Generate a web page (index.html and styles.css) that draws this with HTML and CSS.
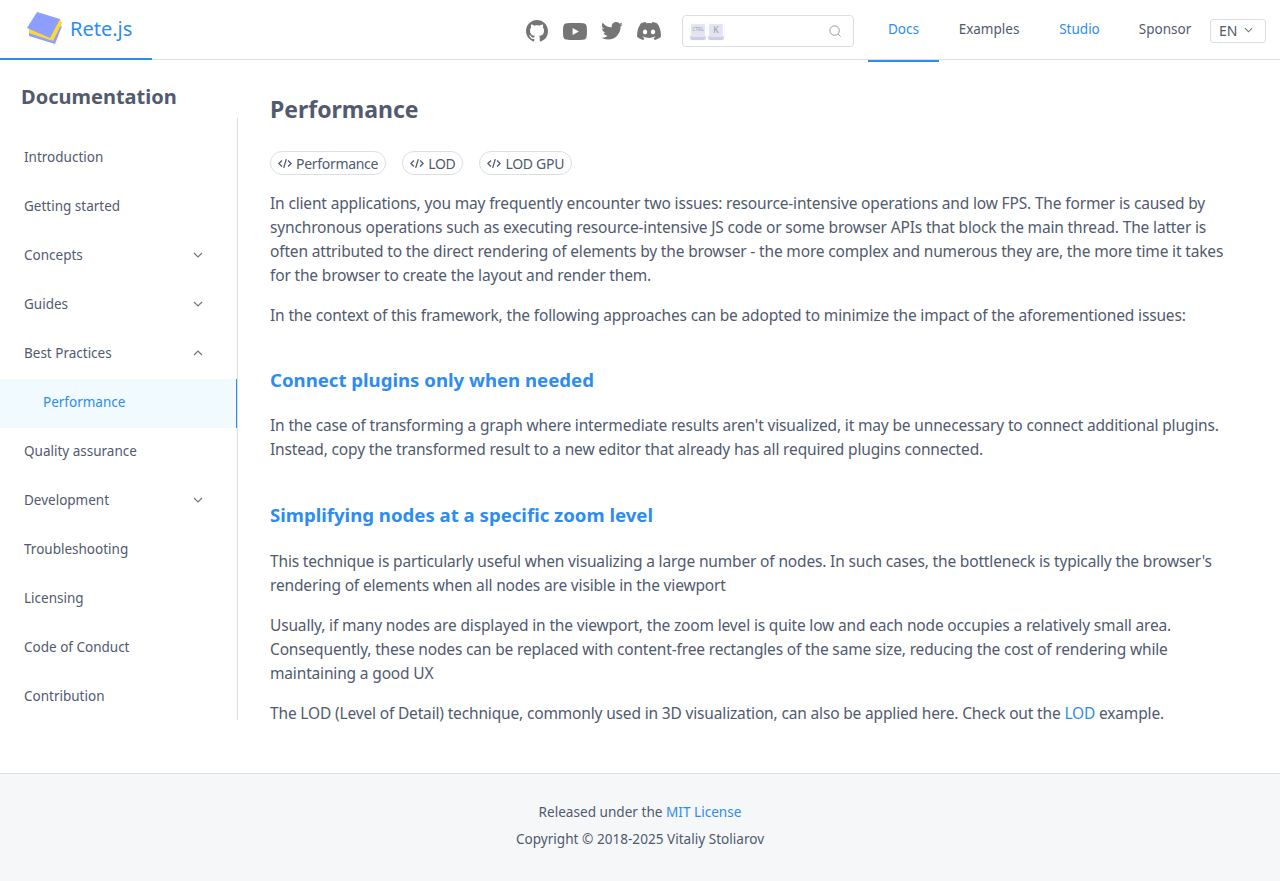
FILE: index.html
```html
<!DOCTYPE html>
<html lang="en">
<head>
    <meta charset="UTF-8">
    <title>Performance | Rete.js</title>
    <link rel="stylesheet" href="styles.css">
</head>
<body>
    <header class="top_bar">
        <a class="logo" href="#">
            <svg class="logo_img" viewBox="0 0 36 34" width="36" height="34">
                <path d="M2 19 L2 24 L28 32 L35 14 Z" fill="#8c9eff"/>
                <path d="M2 17 L2 21 L26 29 L35 11 L33 7 Z" fill="#ffd92c"/>
                <path d="M10 0 L33 7 L23 26 L0 16 Z" fill="#8c9eff"/>
            </svg>
            <span>Rete.js</span>
        </a>
        <div class="social">
            <svg class="github" viewBox="0 0 16 16" width="22" height="22"><path fill="#757575" d="M8 0C3.58 0 0 3.58 0 8c0 3.54 2.29 6.53 5.47 7.59.4.07.55-.17.55-.38 0-.19-.01-.82-.01-1.49-2.01.37-2.53-.49-2.69-.94-.09-.23-.48-.94-.82-1.13-.28-.15-.68-.52-.01-.53.63-.01 1.08.58 1.23.82.72 1.21 1.87.87 2.33.66.07-.52.28-.87.51-1.07-1.78-.2-3.64-.89-3.64-3.95 0-.87.31-1.59.82-2.15-.08-.2-.36-1.02.08-2.12 0 0 .67-.21 2.2.82.64-.18 1.32-.27 2-.27s1.36.09 2 .27c1.53-1.04 2.2-.82 2.2-.82.44 1.1.16 1.92.08 2.12.51.56.82 1.27.82 2.15 0 3.07-1.87 3.75-3.65 3.95.29.25.54.73.54 1.48 0 1.07-.01 1.93-.01 2.2 0 .21.15.46.55.38A8.01 8.01 0 0 0 16 8c0-4.42-3.58-8-8-8z"/></svg>
            <svg viewBox="0 0 24 17" width="24" height="17"><path fill="#757575" d="M23.5 2.7A3 3 0 0 0 21.4.5C19.5 0 12 0 12 0S4.500 0 2.600.5A3 3 0 0 0 .5 2.700C0 4.600 0 8.500 0 8.500s0 3.900.5 5.800a3 3 0 0 0 2.100 2.200c1.900.5 9.400.5 9.400.5s7.500 0 9.400-.5a3 3 0 0 0 2.100-2.200c.5-1.900.5-5.800.5-5.800s0-3.900-.5-5.800zM9.600 12.100V4.900l6.300 3.600z"/></svg>
            <svg viewBox="0 0 24 20" width="22" height="18"><path fill="#757575" d="M24 2.400a9.800 9.800 0 0 1-2.800.8A4.900 4.900 0 0 0 23.300.5a9.800 9.800 0 0 1-3.100 1.200 4.900 4.900 0 0 0-8.400 4.500A14 14 0 0 1 1.700.9a4.900 4.900 0 0 0 1.500 6.600 4.900 4.900 0 0 1-2.200-.6v.1a4.900 4.900 0 0 0 3.900 4.800 4.900 4.900 0 0 1-2.200.1 4.900 4.900 0 0 0 4.600 3.400A9.900 9.900 0 0 1 0 17.300 14 14 0 0 0 7.500 19.500c9.100 0 14-7.500 14-14v-.6A10 10 0 0 0 24 2.400z"/></svg>
            <svg viewBox="0 0 127 96" width="24" height="18"><path fill="#757575" d="M107.700 8.100A105 105 0 0 0 81.500 0a72 72 0 0 0-3.400 6.800 98 98 0 0 0-29 0A72 72 0 0 0 45.700 0a105 105 0 0 0-26.200 8.100C2.800 32.700-1.700 56.600.5 80.200a106 106 0 0 0 32.200 16.200 78 78 0 0 0 6.900-11.200 68 68 0 0 1-10.800-5.200c.9-.7 1.800-1.400 2.700-2.100a75 75 0 0 0 64.200 0c.9.700 1.800 1.500 2.700 2.100a68 68 0 0 1-10.900 5.200 78 78 0 0 0 6.900 11.200 105 105 0 0 0 32.200-16.200c2.600-27.400-4.500-51.100-18.900-72.100zM42.500 65.700c-6.300 0-11.500-5.700-11.500-12.800s5-12.800 11.500-12.800 11.600 5.800 11.500 12.800-5.100 12.800-11.500 12.800zm42.400 0c-6.300 0-11.500-5.700-11.500-12.800s5-12.800 11.500-12.800 11.600 5.800 11.500 12.800-5 12.800-11.500 12.800z"/></svg>
        </div>
        <div class="search">
            <span class="key key_small">CTRL</span>
            <span class="key">K</span>
            <svg class="search_icon" viewBox="0 0 14 14" width="12" height="12"><circle cx="6.500" cy="6.500" r="5.500" fill="none" stroke="#8a8a8a" stroke-width="1"/><path d="M10.500 10.500 L13.500 13.500" stroke="#8a8a8a"/></svg>
        </div>
        <nav class="top_nav">
            <a class="nav_active" href="#">Docs</a>
            <a href="#">Examples</a>
            <a class="nav_blue" href="#">Studio</a>
            <a href="#">Sponsor</a>
        </nav>
        <div class="lang">EN
            <svg viewBox="0 0 10 6" width="9" height="6"><path d="M1 1 L5 5 L9 1" fill="none" stroke="#757575" stroke-width="1.200"/></svg>
        </div>
    </header>
    <div class="page">
        <aside class="sidebar">
            <div class="sidebar_title">Documentation</div>
            <ul class="menu">
                <li>Introduction</li>
                <li>Getting started</li>
                <li>Concepts <svg class="arrow" viewBox="0 0 10 6" width="10" height="6"><path d="M1 1 L5 5 L9 1"/></svg></li>
                <li>Guides <svg class="arrow" viewBox="0 0 10 6" width="10" height="6"><path d="M1 1 L5 5 L9 1"/></svg></li>
                <li>Best Practices <svg class="arrow" viewBox="0 0 10 6" width="10" height="6"><path d="M1 5 L5 1 L9 5"/></svg></li>
                <li class="menu_active">Performance</li>
                <li>Quality assurance</li>
                <li>Development <svg class="arrow" viewBox="0 0 10 6" width="10" height="6"><path d="M1 1 L5 5 L9 1"/></svg></li>
                <li>Troubleshooting</li>
                <li>Licensing</li>
                <li>Code of Conduct</li>
                <li>Contribution</li>
            </ul>
        </aside>
        <main class="content">
            <h1>Performance</h1>
            <div class="tags">
                <a class="tag" href="#"><svg viewBox="0 0 16 12" width="14" height="11"><path d="M4.500 2.500 L1 6 L4.500 9.500 M11.500 2.500 L15 6 L11.500 9.500 M9.500 1 L6.500 11"/></svg>Performance</a>
                <a class="tag" href="#"><svg viewBox="0 0 16 12" width="14" height="11"><path d="M4.500 2.500 L1 6 L4.500 9.500 M11.500 2.500 L15 6 L11.500 9.500 M9.500 1 L6.500 11"/></svg>LOD</a>
                <a class="tag" href="#"><svg viewBox="0 0 16 12" width="14" height="11"><path d="M4.500 2.500 L1 6 L4.500 9.500 M11.500 2.500 L15 6 L11.500 9.500 M9.500 1 L6.500 11"/></svg>LOD GPU</a>
            </div>
            <p>In client applications, you may frequently encounter two issues: resource-intensive operations and low FPS. The former is caused by synchronous operations such as executing resource-intensive JS code or some browser APIs that block the main thread. The latter is often attributed to the direct rendering of elements by the browser - the more complex and numerous they are, the more time it takes for the browser to create the layout and render them.</p>
            <p>In the context of this framework, the following approaches can be adopted to minimize the impact of the aforementioned issues:</p>
            <h2>Connect plugins only when needed</h2>
            <p>In the case of transforming a graph where intermediate results aren't visualized, it may be unnecessary to connect additional plugins. Instead, copy the transformed result to a new editor that already has all required plugins connected.</p>
            <h2>Simplifying nodes at a specific zoom level</h2>
            <p>This technique is particularly useful when visualizing a large number of nodes. In such cases, the bottleneck is typically the browser's rendering of elements when all nodes are visible in the viewport</p>
            <p>Usually, if many nodes are displayed in the viewport, the zoom level is quite low and each node occupies a relatively small area. Consequently, these nodes can be replaced with content-free rectangles of the same size, reducing the cost of rendering while maintaining a good UX</p>
            <p>The LOD (Level of Detail) technique, commonly used in 3D visualization, can also be applied here. Check out the <a href="#">LOD</a> example.</p>
        </main>
    </div>
    <footer class="footer">
        <div>Released under the <a href="#">MIT License</a></div>
        <div>Copyright © 2018-2025 Vitaliy Stoliarov</div>
    </footer>
</body>
</html>
```
FILE: styles.css
```css
* {
    box-sizing: border-box;
}
body {
    margin: 0;
    font-family: "Noto Sans", sans-serif;
    color: #515a6e;
    background: white;
}
a {
    color: #2d8cf0;
    text-decoration: none;
}

.top_bar {
    display: flex;
    align-items: center;
    height: 60px;
    border-bottom: 1px solid #dcdee2;
}
.logo {
    display: flex;
    flex: none;
    align-items: center;
    gap: 7px;
    align-self: flex-start;
    width: 152px;
    height: 60px;
    padding-left: 27px;
    border-bottom: 2px solid #2d8cf0;
    font-size: 20px;
}
.logo span {
    margin-bottom: 2px;
}
.social {
    display: flex;
    flex: none;
    align-items: center;
    gap: 14px;
    margin: 3px 0 0 374px;
}
.github {
    margin-right: 1px;
}
.search {
    display: flex;
    flex: none;
    align-items: center;
    gap: 2px;
    width: 172px;
    height: 32px;
    margin: 3px 0 0 21px;
    padding: 0 12px 0 7px;
    border: 1px solid #dcdee2;
    border-radius: 4px;
}
.key {
    width: 16px;
    height: 16px;
    font-size: 9px;
    line-height: 13px;
    text-align: center;
    color: #969faf;
    background: #e3e4f0;
    border-radius: 2px;
    box-shadow: inset 0 -2px 0 #cdcde6, inset 0 0 1px 1px #fff, 0 1px 1px #c8c8dc;
}
.key_small {
    font-size: 5px;
}
.search_icon {
    margin-left: auto;
}
.top_nav {
    display: grid;
    flex: none;
    grid-template-columns: 71px 100px 81px 90px;
    align-self: stretch;
    margin-left: 14px;
}
.top_nav a {
    height: 62px;
    font-size: 13.500px;
    line-height: 59px;
    text-align: center;
    color: #515a6e;
}
.top_nav .nav_blue {
    color: #2d8cf0;
}
.top_nav .nav_active {
    color: #2d8cf0;
    border-bottom: 2px solid #2d8cf0;
}
.lang {
    display: flex;
    flex: none;
    align-items: center;
    gap: 7px;
    width: 56px;
    height: 24px;
    margin-top: 3px;
    padding: 0 0 2px 8px;
    border: 1px solid #dcdee2;
    border-radius: 3px;
    font-size: 14px;
}

.page {
    display: flex;
    min-height: 713px;
}
.sidebar {
    flex: none;
    width: 238px;
}
.sidebar_title {
    height: 58px;
    padding: 22px 0 0 21px;
    font-size: 20px;
    font-weight: 700;
    line-height: 30px;
}
.menu {
    margin: 0;
    padding: 16px 0 0;
    list-style: none;
    height: 602px;
    border-right: 1px solid #dcdee2;
}
.menu li {
    display: flex;
    align-items: center;
    justify-content: space-between;
    height: 49px;
    padding: 0 34px 4px 24px;
    font-size: 13.500px;
}
.arrow {
    fill: none;
    stroke: #757575;
    stroke-width: 1.200;
}
.menu .menu_active {
    padding-left: 43px;
    color: #2d8cf0;
    background: #f0faff;
    border-right: 1px solid #2d8cf0;
}

.content {
    flex: 1;
    padding: 0 40px 0 32px;
}
h1 {
    margin: 31px 0 24px;
    font-size: 23px;
    line-height: 36px;
    font-weight: 700;
}
.tags {
    display: flex;
    gap: 16px;
    margin-bottom: 16px;
}
.tag {
    display: flex;
    align-items: center;
    gap: 4px;
    height: 24px;
    padding: 0 7px;
    border: 1px solid #dcdee2;
    border-radius: 12px;
    font-size: 14px;
    letter-spacing: -0.300px;
    color: #515a6e;
}
.tag svg {
    fill: none;
    stroke: #515a6e;
    stroke-width: 1.500;
}
p {
    margin: 0 0 16px;
    font-size: 15.500px;
    letter-spacing: -0.160px;
    line-height: 24px;
}
h2 {
    margin: 38px 0 18px;
    font-size: 18.600px;
    line-height: 30px;
    font-weight: 700;
    color: #2d8cf0;
}
h2:last-of-type {
    margin: 39px 0 19px;
}

.footer {
    height: 108px;
    padding-top: 24px;
    border-top: 1px solid #dcdee2;
    background: #f5f7f9;
    font-size: 13.600px;
    line-height: 27px;
    text-align: center;
}
```
